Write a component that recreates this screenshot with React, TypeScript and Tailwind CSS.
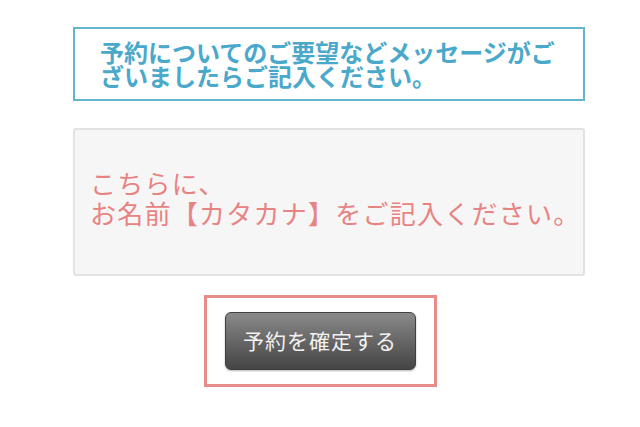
export default function App() {
  const jp = { fontFamily: '"Noto Sans CJK JP", "Noto Sans", sans-serif' };

  return (
    <div className="w-[640px] h-[427px] bg-white overflow-hidden" style={jp}>
      <div className="pt-[27px] pl-[73px] w-[585px]">
        <div className="h-[74px] border-2 border-[#66b5cf] pl-[25px] pt-[11px]">
          <p className="text-[24px] leading-[24px] font-bold text-[#4aa9cb] whitespace-nowrap">
            予約についてのご要望などメッセージがご
            <br />
            ざいましたらご記入ください。
          </p>
        </div>

        <div className="mt-[27px] h-[148px] rounded-[3px] border-2 border-[#e2e2e2] bg-[#f6f6f6] flex items-center pl-[15px] pb-[8px]">
          <p className="text-[26px] leading-[30px] text-[#e88383] tracking-[1.25px] whitespace-nowrap">
            こちらに、
            <br />
            お名前【カタカナ】をご記入ください。
          </p>
        </div>
      </div>

      <div className="mt-[19px] flex justify-center">
        <div className="w-[233px] h-[92px] border-[3px] border-[#e88b8b] flex items-center justify-center">
          <button className="w-[191px] h-[58px] rounded-[6px] border border-[#3f3f3f] bg-gradient-to-b from-[#8a8a8a] to-[#454545] text-[21px] text-[#f2f2f2] tracking-[1px] shadow-[0_1px_2px_rgba(0,0,0,0.3)]">
            予約を確定する
          </button>
        </div>
      </div>
    </div>
  );
}
